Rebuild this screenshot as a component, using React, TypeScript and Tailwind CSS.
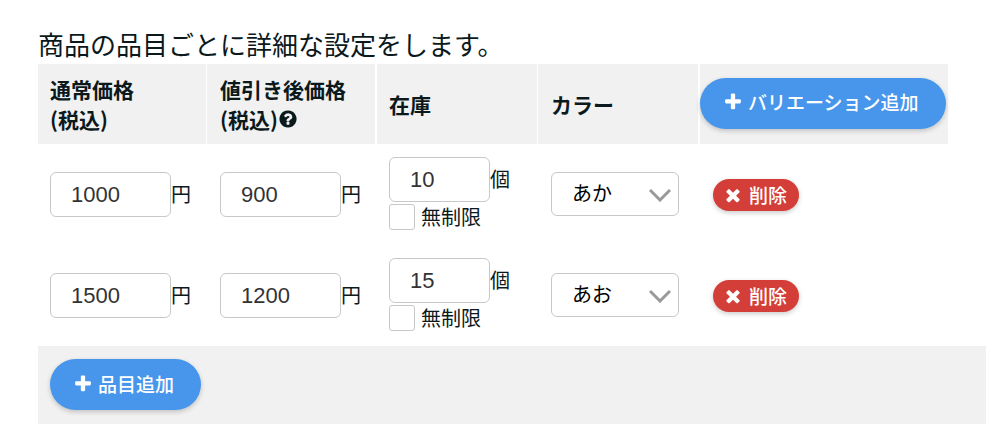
import { useState } from 'react';

const items = [
  { id: 1, price: '1000', salePrice: '900', stock: '10', color: 'あか' },
  { id: 2, price: '1500', salePrice: '1200', stock: '15', color: 'あお' },
];

const PLUS =
  'M1600 736v192q0 40-28 68t-68 28h-416v416q0 40-28 68t-68 28h-192q-40 0-68-28t-28-68v-416h-416q-40 0-68-28t-28-68v-192q0-40 28-68t68-28h416v-416q0-40 28-68t68-28h192q40 0 68 28t28 68v416h416q40 0 68 28t28 68z';
const TIMES =
  'M1490 1322q0 40-28 68l-136 136q-28 28-68 28t-68-28l-294-294-294 294q-28 28-68 28t-68-28l-136-136q-28-28-28-68t28-68l294-294-294-294q-28-28-28-68t28-68l136-136q28-28 68-28t68 28l294 294 294-294q28-28 68-28t68 28l136 136q28 28 28 68t-28 68l-294 294 294 294q28 28 28 68z';
const QUESTION =
  'M1024 1376v-192q0-14-9-23t-23-9h-192q-14 0-23 9t-9 23v192q0 14 9 23t23 9h192q14 0 23-9t9-23zm256-672q0-88-55.5-163t-138.5-116-170-41q-243 0-371 213-15 24 8 42l132 100q7 6 19 6 16 0 25-12 53-68 86-92 34-24 86-24 48 0 85.5 26t37.5 59q0 38-20 61t-68 45q-63 28-115.5 86.5t-52.5 125.5v36q0 14 9 23t23 9h192q14 0 23-9t9-23q0-19 21.5-49.5t54.5-49.5q32-18 49-28.5t46-35 44.5-48 28-60.5 12.5-81zm384 192q0 209-103 385.5t-279.5 279.5-385.5 103-385.5-103-279.5-279.5-103-385.5 103-385.5 279.5-279.5 385.5-103 385.5 103 279.5 279.5 103 385.5z';

function Icon({ path }: { path: string }) {
  return (
    <svg viewBox="0 0 1792 1792" className="w-5 h-5 shrink-0" fill="currentColor" aria-hidden="true">
      <path d={path} />
    </svg>
  );
}

function AddButton({ label }: { label: string }) {
  return (
    <button
      type="button"
      className="inline-flex items-center gap-[5px] h-[51px] pl-[23px] pr-[27px] pb-[2px] rounded-full bg-[#4796ec] text-white text-[19px] font-medium whitespace-nowrap shadow-[0_2px_5px_rgba(0,0,0,0.2)]"
    >
      <Icon path={PLUS} />
      {label}
    </button>
  );
}

function NumberField({ label, value, unit, width }: { label: string; value: string; unit: string; width: string }) {
  const [current, setCurrent] = useState(value);

  return (
    <label className="flex items-center">
      <input
        type="text"
        inputMode="numeric"
        aria-label={label}
        value={current}
        onChange={(e) => setCurrent(e.target.value)}
        className={`${width} h-[45px] pl-5 pr-2 border border-[#c8c8c8] rounded-md bg-white text-[#333] text-[22px] font-['Liberation_Sans',sans-serif]`}
      />
      <span className="pb-[2px]">{unit}</span>
    </label>
  );
}

function ItemRow({ item }: { item: (typeof items)[number] }) {
  return (
    <tr>
      <td className="pl-3">
        <NumberField label="通常価格" value={item.price} unit="円" width="w-[121px]" />
      </td>
      <td className="pl-[13px]">
        <NumberField label="値引き後価格" value={item.salePrice} unit="円" width="w-[121px]" />
      </td>
      <td className="pl-3 py-[13px]">
        <NumberField label="在庫" value={item.stock} unit="個" width="w-[101px]" />
        <label className="flex items-center gap-[6px] h-[30px]">
          <input
            type="checkbox"
            className="appearance-none w-[26px] h-[26px] border border-[#c8c8c8] rounded-[3px] bg-white checked:bg-[#4796ec]"
          />
          無制限
        </label>
      </td>
      <td className="pl-[13px] pb-[2px]">
        <div className="relative w-32">
          <select
            aria-label="カラー"
            defaultValue={item.color}
            className="appearance-none block w-full h-11 pl-5 pr-10 pb-[2px] border border-[#c8c8c8] rounded-md bg-white text-black text-[20px]"
          >
            <option>あか</option>
            <option>あお</option>
          </select>
          <svg
            viewBox="0 0 22 14"
            className="absolute right-2 top-4 w-[22px] h-[14px] pointer-events-none"
            fill="none"
            stroke="#999"
            strokeWidth="3"
            aria-hidden="true"
          >
            <path d="M1 2l10 10L21 2" />
          </svg>
        </div>
      </td>
      <td className="pl-[13px]">
        <button
          type="button"
          className="flex items-center gap-[6px] h-8 pl-[10px] pr-3 rounded-full bg-[#d33f38] text-white text-[19px] font-medium whitespace-nowrap shadow-[0_2px_5px_rgba(0,0,0,0.2)]"
        >
          <Icon path={TIMES} />
          削除
        </button>
      </td>
    </tr>
  );
}

export default function App() {
  return (
    <main className="pl-[38px] pt-6 pb-1 bg-white text-[#0b191c] text-[20px] leading-[30px] font-['Noto_Sans_CJK_JP',sans-serif]">
      <p className="text-[26px] leading-10">商品の品目ごとに詳細な設定をします。</p>

      <div className="pr-[38px]">
        <table className="w-full table-fixed border-separate border-spacing-0">
          <colgroup>
            <col className="w-[169px]" />
            <col className="w-[170px]" />
            <col className="w-[161px]" />
            <col className="w-[162px]" />
            <col />
          </colgroup>
          <thead>
            <tr className="h-20 text-left text-[21px]">
              <th className="pl-3 bg-[#f1f1f1] border-r border-white">
                通常価格
                <br />
                (税込)
              </th>
              <th className="pl-[13px] bg-[#f1f1f1] border-r-2 border-white">
                値引き後価格
                <span className="flex items-center">
                  (税込)
                  <Icon path={QUESTION} />
                </span>
              </th>
              <th className="pl-3 bg-[#f1f1f1] border-r border-white">在庫</th>
              <th className="pl-[13px] bg-[#f1f1f1] border-r-2 border-white">カラー</th>
              <th className="pb-[2px] bg-[#f1f1f1]">
                <div className="flex">
                  <AddButton label="バリエーション追加" />
                </div>
              </th>
            </tr>
          </thead>
          <tbody>
            {items.map((item) => (
              <ItemRow key={item.id} item={item} />
            ))}
          </tbody>
        </table>
      </div>

      <div className="flex pl-3 pt-[13px] pb-[14px] bg-[#f1f1f1]">
        <AddButton label="品目追加" />
      </div>
    </main>
  );
}
